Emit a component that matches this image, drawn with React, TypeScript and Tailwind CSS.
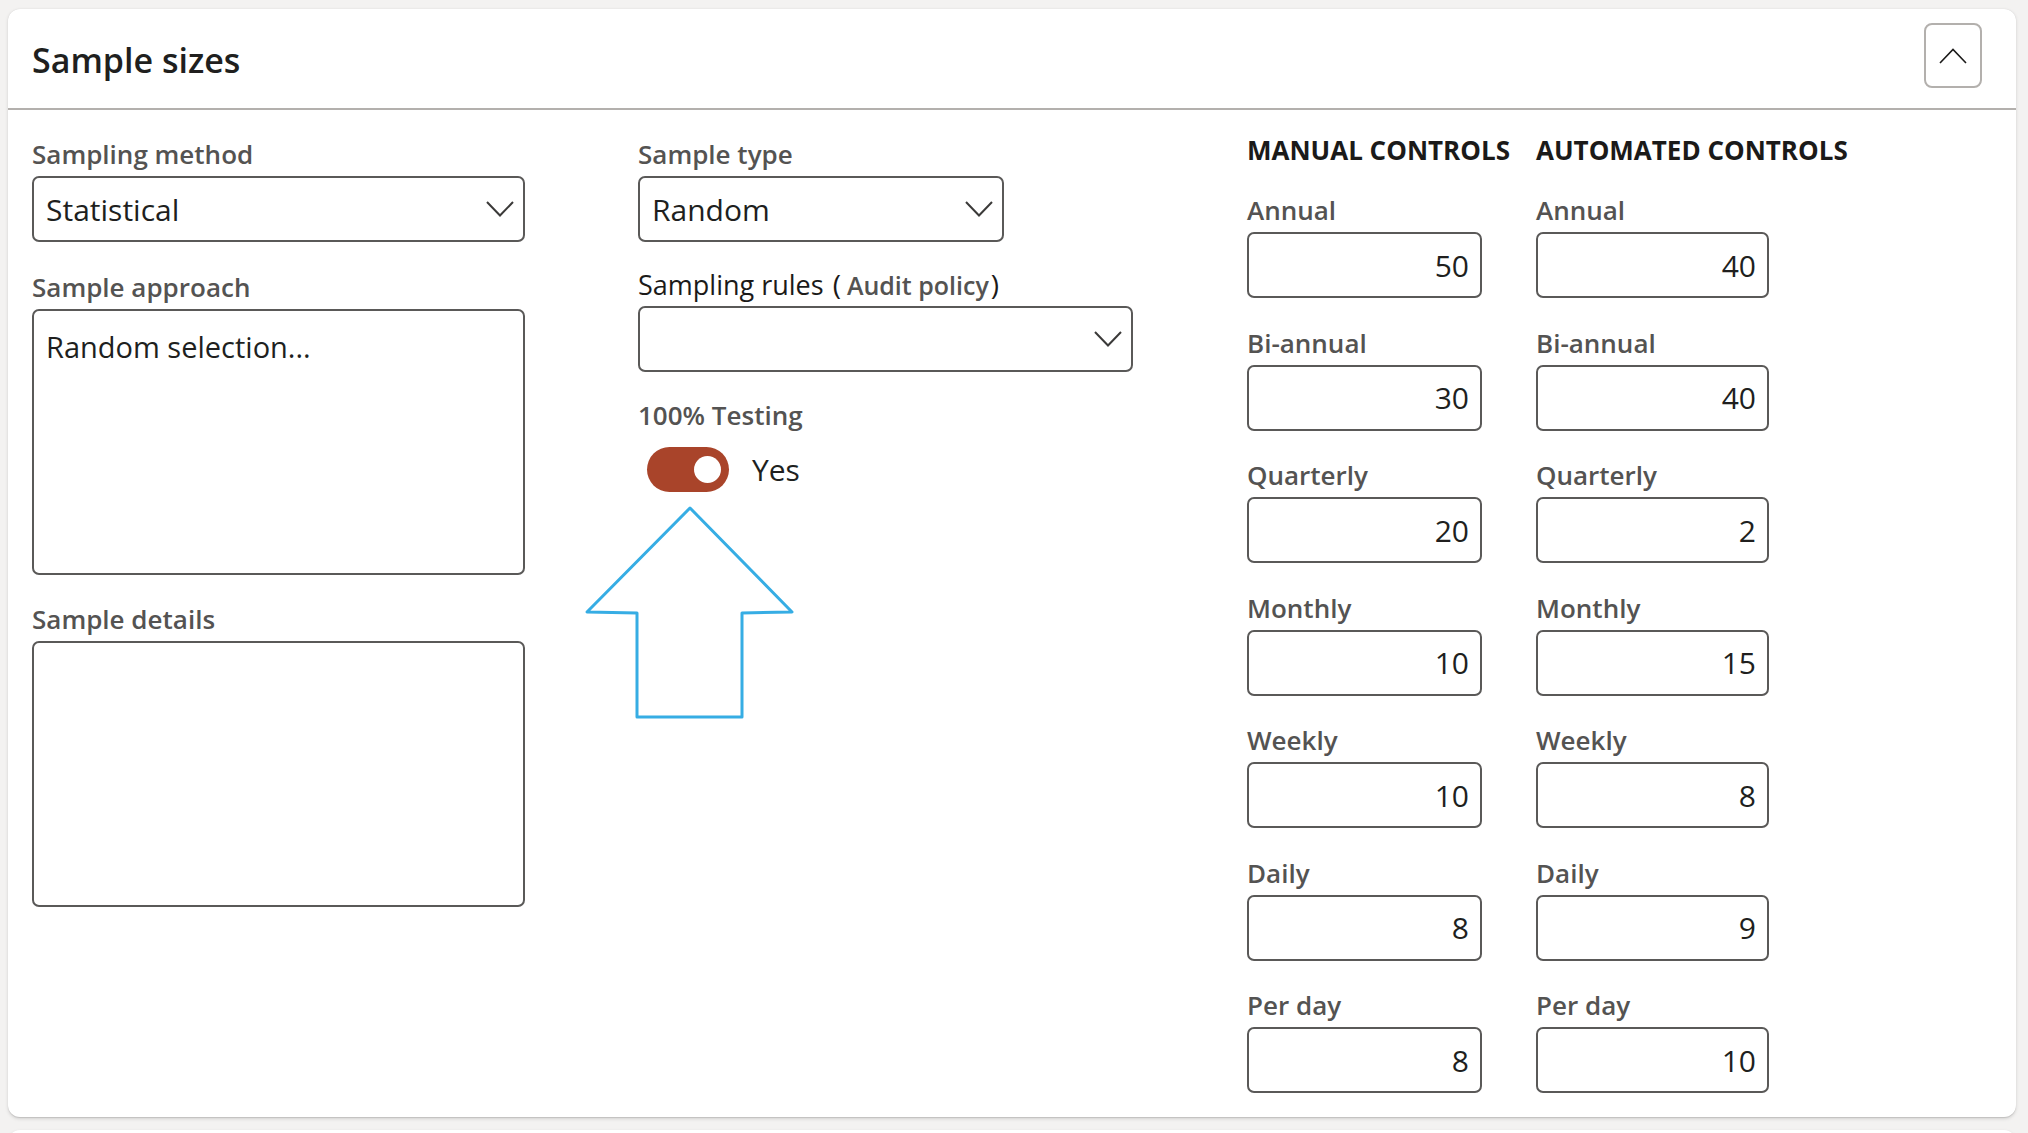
import React from 'react';

const labelCls =
  'block h-[34px] leading-[34px] text-[26px] font-semibold text-[#545352] whitespace-nowrap';
const boxCls = 'mt-[5px] rounded-[7px] border-2 border-[#5a5958] bg-white';

const manual = [
  { label: 'Annual', value: '50' },
  { label: 'Bi-annual', value: '30' },
  { label: 'Quarterly', value: '20' },
  { label: 'Monthly', value: '10' },
  { label: 'Weekly', value: '10' },
  { label: 'Daily', value: '8' },
  { label: 'Per day', value: '8' },
];

const automated = [
  { label: 'Annual', value: '40' },
  { label: 'Bi-annual', value: '40' },
  { label: 'Quarterly', value: '2' },
  { label: 'Monthly', value: '15' },
  { label: 'Weekly', value: '8' },
  { label: 'Daily', value: '9' },
  { label: 'Per day', value: '10' },
];

function ChevronDown() {
  return (
    <svg width="28" height="16" viewBox="0 0 28 16" fill="none">
      <path d="M1 1 L14 14.5 L27 1" stroke="#3b3a39" strokeWidth="2" />
    </svg>
  );
}

function Dropdown({ value, width }: { value?: string; width: string }) {
  return (
    <div className={`${boxCls} ${width} h-[66px] flex items-center justify-between pl-[12px] pr-[9px]`}>
      <span className="text-[30px] text-[#201f1e]">{value}</span>
      <ChevronDown />
    </div>
  );
}

function NumberColumn({ title, items }: { title: string; items: { label: string; value: string }[] }) {
  return (
    <div className="flex flex-col">
      <div className="h-[34px] leading-[34px] text-[26px] font-bold text-[#1b1a19] whitespace-nowrap">
        {title}
      </div>
      <div className="mt-[26px] flex flex-col gap-[27.5px]">
        {items.map((item) => (
          <div key={item.label}>
            <span className={labelCls}>{item.label}</span>
            <div className={`${boxCls} h-[66px] flex items-center justify-end pr-[11px]`}>
              <span className="text-[30px] text-[#201f1e]">{item.value}</span>
            </div>
          </div>
        ))}
      </div>
    </div>
  );
}

export default function App() {
  return (
    <div className="min-h-screen bg-[#f3f2f1] pt-[9px] pl-[8px] font-['Open_Sans',sans-serif] overflow-hidden">
      <div className="w-[2008px] bg-white rounded-[12px] shadow-[0_1.6px_3.6px_rgba(0,0,0,0.13),0_0.3px_0.9px_rgba(0,0,0,0.11)]">
        {/* Header */}
        <div className="h-[101px] flex justify-between pl-[24px] pr-[34px] border-b-2 border-[#b3b0ad]">
          <h2 className="mt-[29px] h-[44px] leading-[44px] text-[34px] font-semibold text-[#201f1e]">
            Sample sizes
          </h2>
          <button className="mt-[14px] w-[58px] h-[65px] rounded-[8px] border-2 border-[#b3b0ad] flex items-center justify-center">
            <svg width="28" height="16" viewBox="0 0 28 16" fill="none">
              <path d="M1 15 L14 1.5 L27 15" stroke="#1b1a19" strokeWidth="1.6" />
            </svg>
          </button>
        </div>

        {/* Body */}
        <div className="flex pl-[24px] pt-[27px] pb-[24px]">
          {/* Column 1 */}
          <div className="w-[493px] flex flex-col">
            <span className={labelCls}>Sampling method</span>
            <Dropdown value="Statistical" width="w-full" />

            <span className={`${labelCls} mt-[27.5px]`}>Sample approach</span>
            <div className={`${boxCls} h-[266px] pl-[12px] pt-[16px]`}>
              <span className="block leading-[40px] text-[29px] text-[#201f1e]">Random selection...</span>
            </div>

            <span className={`${labelCls} mt-[27.5px]`}>Sample details</span>
            <div className={`${boxCls} h-[266px]`} />
          </div>

          {/* Column 2 */}
          <div className="relative ml-[113px] w-[495px] flex flex-col">
            <span className={labelCls}>Sample type</span>
            <Dropdown value="Random" width="w-[366px]" />

            <div className="mt-[25px] h-[34px] leading-[34px] whitespace-nowrap flex items-baseline text-[#1b1a19]">
              <span className="text-[27px]">Sampling rules</span>
              <span className="text-[28px] ml-[9px]">(</span>
              <span className="text-[25px] font-semibold text-[#545352] ml-[6px]">Audit policy</span>
              <span className="text-[28px] ml-[2px]">)</span>
            </div>
            <Dropdown width="w-full" />

            <span className={`${labelCls} mt-[25.5px]`}>100% Testing</span>
            <div className="mt-[15.5px] ml-[9px] flex items-center">
              <div className="w-[82px] h-[45px] rounded-full bg-[#a9442a] flex items-center justify-end pr-[8px]">
                <div className="w-[27px] h-[27px] rounded-full bg-white" />
              </div>
              <span className="ml-[23px] text-[30px] text-[#201f1e]">Yes</span>
            </div>

            {/* annotation arrow */}
            <svg
              className="absolute left-[-54px] top-[369px]"
              width="212"
              height="216"
              viewBox="0 0 212 216"
              fill="none"
            >
              <path
                d="M106 2 L208 106 L158 107 L158 211 L53 211 L53 107 L3 106 Z"
                stroke="#36ade4"
                strokeWidth="3"
                strokeLinejoin="round"
              />
            </svg>
          </div>

          {/* Column 3 */}
          <div className="ml-[114px] w-[235px] -mt-[4px]">
            <NumberColumn title="MANUAL CONTROLS" items={manual} />
          </div>

          {/* Column 4 */}
          <div className="ml-[54px] w-[233px] -mt-[4px]">
            <NumberColumn title="AUTOMATED CONTROLS" items={automated} />
          </div>
        </div>
      </div>
      <div className="mt-[13px] w-[2008px] h-[20px] bg-white rounded-t-[12px] shadow-[0_1.6px_3.6px_rgba(0,0,0,0.13)]" />
    </div>
  );
}
